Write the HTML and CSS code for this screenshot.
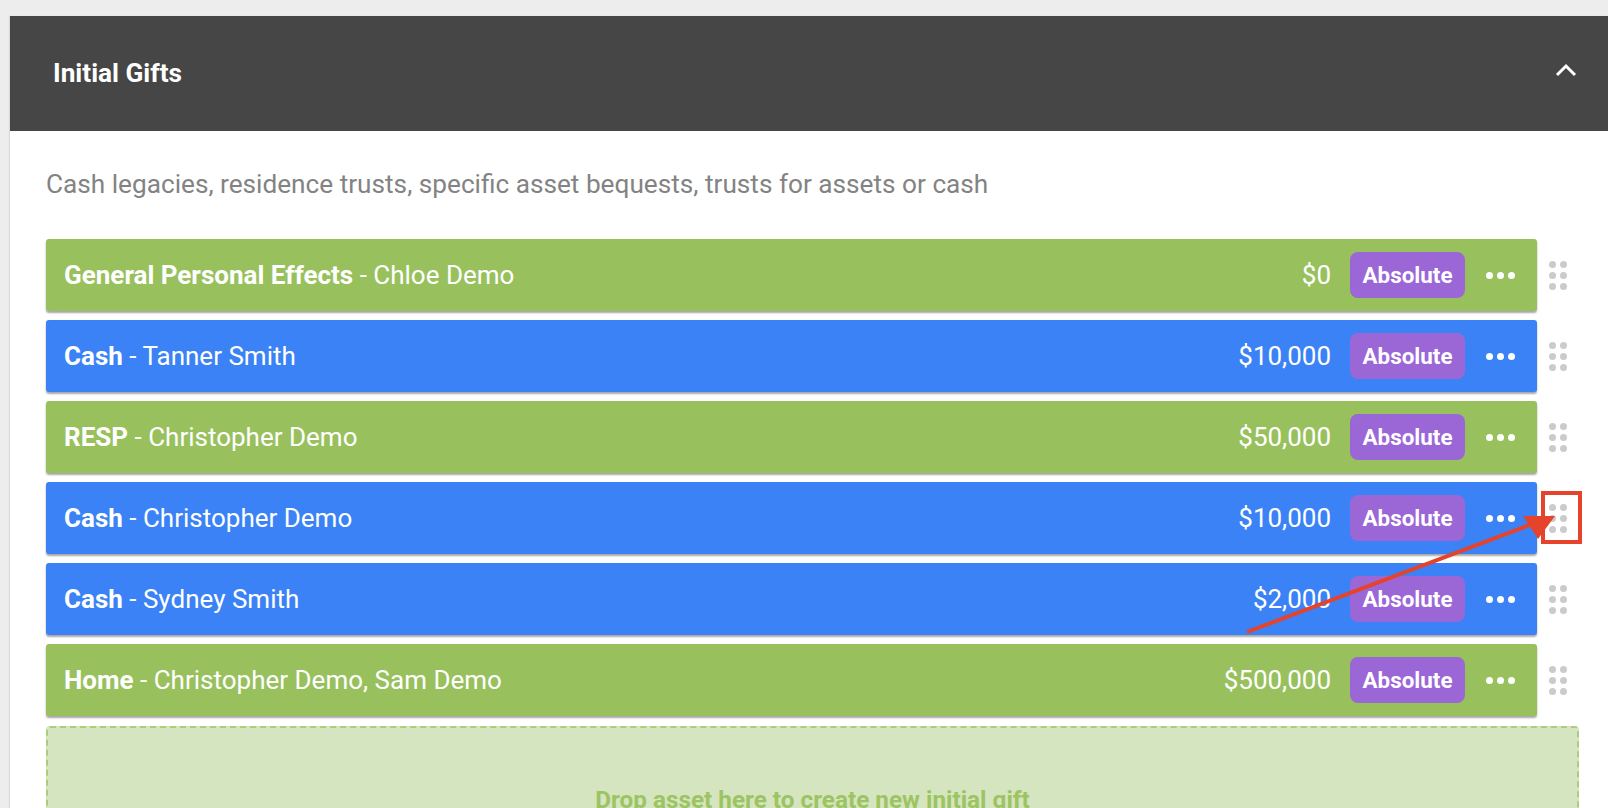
FILE: index.html
```html
<!DOCTYPE html>
<html>
    <head>
        <meta charset="utf-8">
        <title>Initial Gifts</title>
        <link rel="stylesheet" href="styles.css">
    </head>
    <body>
        <div class="panel">
            <div class="panel-head">
                <h2 class="panel-title">Initial Gifts</h2>
                <svg class="chevron" width="22" height="14" viewBox="0 0 22 14">
                    <polyline points="2,12 11,3 20,12" fill="none" stroke="#fff" stroke-width="3"/>
                </svg>
            </div>
            <div class="panel-body">
                <p class="intro">Cash legacies, residence trusts, specific asset bequests, trusts for assets or cash</p>
                <ul class="gifts">
                    <li class="gift">
                        <div class="gift-bar green">
                            <span class="gift-name"><b>General Personal Effects</b> - Chloe Demo</span>
                            <span class="gift-amount">$0</span>
                            <span class="badge">Absolute</span>
                            <span class="more"><i></i><i></i><i></i></span>
                        </div>
                        <span class="handle"><i></i><i></i><i></i><i></i><i></i><i></i></span>
                    </li>
                    <li class="gift">
                        <div class="gift-bar blue">
                            <span class="gift-name"><b>Cash</b> - Tanner Smith</span>
                            <span class="gift-amount">$10,000</span>
                            <span class="badge">Absolute</span>
                            <span class="more"><i></i><i></i><i></i></span>
                        </div>
                        <span class="handle"><i></i><i></i><i></i><i></i><i></i><i></i></span>
                    </li>
                    <li class="gift">
                        <div class="gift-bar green">
                            <span class="gift-name"><b>RESP</b> - Christopher Demo</span>
                            <span class="gift-amount">$50,000</span>
                            <span class="badge">Absolute</span>
                            <span class="more"><i></i><i></i><i></i></span>
                        </div>
                        <span class="handle"><i></i><i></i><i></i><i></i><i></i><i></i></span>
                    </li>
                    <li class="gift">
                        <div class="gift-bar blue">
                            <span class="gift-name"><b>Cash</b> - Christopher Demo</span>
                            <span class="gift-amount">$10,000</span>
                            <span class="badge">Absolute</span>
                            <span class="more"><i></i><i></i><i></i></span>
                        </div>
                        <span class="handle"><i></i><i></i><i></i><i></i><i></i><i></i></span>
                    </li>
                    <li class="gift">
                        <div class="gift-bar blue">
                            <span class="gift-name"><b>Cash</b> - Sydney Smith</span>
                            <span class="gift-amount">$2,000</span>
                            <span class="badge">Absolute</span>
                            <span class="more"><i></i><i></i><i></i></span>
                        </div>
                        <span class="handle"><i></i><i></i><i></i><i></i><i></i><i></i></span>
                    </li>
                    <li class="gift">
                        <div class="gift-bar green">
                            <span class="gift-name"><b>Home</b> - Christopher Demo, Sam Demo</span>
                            <span class="gift-amount">$500,000</span>
                            <span class="badge">Absolute</span>
                            <span class="more"><i></i><i></i><i></i></span>
                        </div>
                        <span class="handle"><i></i><i></i><i></i><i></i><i></i><i></i></span>
                    </li>
                </ul>
                <div class="dropzone">Drop asset here to create new initial gift</div>
            </div>
        </div>
        <!-- annotation drawn over the screenshot -->
        <svg class="annotation" width="1608" height="808" viewBox="0 0 1608 808">
            <rect x="1543" y="493" width="37" height="49" fill="none" stroke="#e5432b" stroke-width="4"/>
            <line x1="1247" y1="632" x2="1532" y2="524" stroke="#e5432b" stroke-width="4"/>
            <polygon points="1523,516 1555,516 1538,539" fill="#e5432b"/>
        </svg>
    </body>
</html>
```

FILE: styles.css
```css
*{
    margin: 0;
    padding: 0;
}
body{
    position: relative;
    background: #ededed;
    font-family: Roboto, "Liberation Sans", sans-serif;
    overflow: hidden;
    height: 808px;
}
.panel{
    margin: 16px 0 0 10px;
    background: #fff;
    min-height: 792px;
    box-shadow: -1px 0 1px rgba(0,0,0,.08);
}
.panel-head{
    display: flex;
    align-items: center;
    justify-content: space-between;
    height: 115px;
    padding: 0 31px 0 43px;
    background: #464646;
}
.panel-title{
    color: #fff;
    font-size: 26.2px;
    font-weight: 700;
    margin-top: -2px;
}
.chevron{
    display: block;
    margin-top: -8px;
}
.panel-body{
    padding: 38px 29px 0 36px;
}
.intro{
    color: #838383;
    font-size: 26.2px;
    line-height: 31px;
    margin-bottom: 39px;
}
.gifts{
    list-style: none;
}
.gift{
    display: flex;
    align-items: center;
    margin-bottom: 9px;
}
.gift-bar{
    flex: 1;
    display: flex;
    align-items: center;
    height: 72px;
    padding: 0 22px 0 18px;
    border-radius: 3px;
    color: #fff;
    box-shadow: 0 2px 2px rgba(0,0,0,.35);
}
.green{
    background: #98c15e;
}
.blue{
    background: #3a82f6;
}
.gift-name{
    flex: 1;
    font-size: 26px;
}
.gift-name b{
    font-weight: 700;
}
.gift-amount{
    font-size: 26px;
    margin-right: 19px;
}
.badge{
    display: flex;
    align-items: center;
    height: 46px;
    padding: 0 12.5px;
    border-radius: 8px;
    background: #9b66d6;
    font-size: 22.4px;
    font-weight: 700;
}
.more{
    display: flex;
    gap: 4px;
    margin-left: 21px;
}
.more i{
    width: 7px;
    height: 7px;
    border-radius: 50%;
    background: #fff;
}
.handle{
    display: grid;
    grid-template-columns: 7px 7px;
    gap: 4px;
    width: 18px;
    margin: 0 12px;
}
.handle i{
    width: 7px;
    height: 7px;
    border-radius: 50%;
    background: #cbcbcb;
}
.dropzone{
    height: 150px;
    margin-top: 10px;
    padding-top: 57px;
    border: 2px dashed #abcd7c;
    border-radius: 4px;
    background: #d5e5bf;
    color: #9cc462;
    text-align: center;
    font-size: 24.3px;
    font-weight: 700;
    box-sizing: border-box;
}
.annotation{
    position: absolute;
    top: 0;
    left: 0;
    pointer-events: none;
}
```
